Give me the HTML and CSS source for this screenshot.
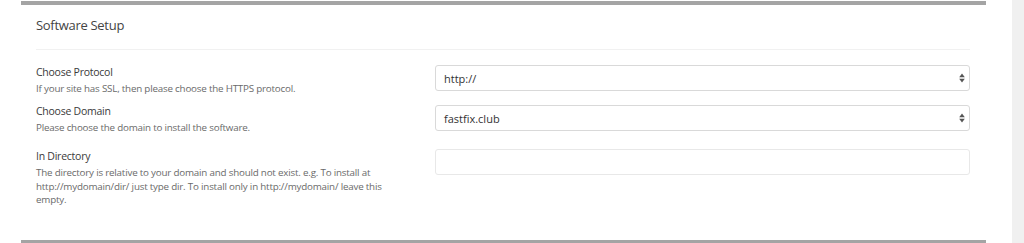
FILE: index.html
```html
<!DOCTYPE html>
<html>
<head>
<meta charset="utf-8">
<link rel="stylesheet" href="styles.css">
</head>
<body>
<div class="page">
  <div class="panel">
    <div class="panel-head">Software Setup</div>
    <div class="form">
      <div class="row row-protocol">
        <div class="label-col">
          <div class="label">Choose Protocol</div>
          <div class="desc">If your site has SSL, then please choose the HTTPS protocol.</div>
        </div>
        <div class="field-col">
          <div class="select"><span>http://</span>
            <svg class="arrows" width="6" height="10" viewBox="0 0 6 10"><path d="M3 0.5 L5.8 4.2 H0.2 Z" fill="#555"/><path d="M3 9.5 L5.8 5.8 H0.2 Z" fill="#555"/></svg>
          </div>
        </div>
      </div>
      <div class="row row-domain">
        <div class="label-col">
          <div class="label">Choose Domain</div>
          <div class="desc">Please choose the domain to install the software.</div>
        </div>
        <div class="field-col">
          <div class="select select-domain"><span>fastfix.club</span>
            <svg class="arrows" width="6" height="10" viewBox="0 0 6 10"><path d="M3 0.5 L5.8 4.2 H0.2 Z" fill="#555"/><path d="M3 9.5 L5.8 5.8 H0.2 Z" fill="#555"/></svg>
          </div>
        </div>
      </div>
      <div class="row row-dir">
        <div class="label-col">
          <div class="label">In Directory</div>
          <div class="desc">The directory is relative to your domain and should not exist. e.g. To install at http://mydomain/dir/ just type dir. To install only in http://mydomain/ leave this empty.</div>
        </div>
        <div class="field-col">
          <div class="input"></div>
        </div>
      </div>
    </div>
  </div>
  <div class="side"></div>
</div>
</body>
</html>
```
FILE: styles.css
```css
html, body {
  margin: 0;
  padding: 0;
  background: #ffffff;
}
body {
  font-family: "Open Sans", "Noto Sans", sans-serif;
  color: #333;
}
.page {
  display: flex;
  height: 243px;
  overflow: hidden;
}
.panel {
  margin-left: 21px;
  margin-top: 1px;
  width: 965px;
  height: 242px;
  border-top: 4px solid #a4a4a4;
  border-bottom: 3px solid #a4a4a4;
  box-sizing: border-box;
  padding: 0 16px 0 15px;
}
.side {
  margin-left: 26px;
  width: 12px;
  background: #f0f0f0;
  height: 243px;
}
.panel-head {
  font-size: 13px;
  letter-spacing: -0.3px;
  line-height: 18px;
  padding-top: 11px;
  padding-bottom: 15px;
  color: #444;
  border-bottom: 1px solid #f1f1f1;
}
.form {
  padding-top: 14px;
}
.row {
  display: grid;
  grid-template-columns: 399px 1fr;
}
.row-protocol {
  margin-bottom: 7.5px;
}
.row-domain {
  margin-bottom: 13.5px;
}
.label {
  font-size: 10.5px;
  letter-spacing: -0.25px;
  line-height: 17px;
  color: #3a3a3a;
}
.desc {
  font-size: 9.8px;
  letter-spacing: -0.2px;
  line-height: 13.5px;
  color: #6a6a6a;
  max-width: 360px;
  margin-top: 1px;
}
.select {
  height: 26px;
  box-sizing: border-box;
  border: 1px solid #d9d9d9;
  border-radius: 3px;
  display: flex;
  align-items: center;
  justify-content: space-between;
  padding: 0 4px 0 8px;
  font-size: 11px;
  color: #333;
  margin-top: 1px;
}
.select-domain {
  margin-top: 2px;
}
.input {
  height: 26px;
  box-sizing: border-box;
  border: 1px solid #e8e8e8;
  border-radius: 3px;
  margin-top: 1px;
}
```
